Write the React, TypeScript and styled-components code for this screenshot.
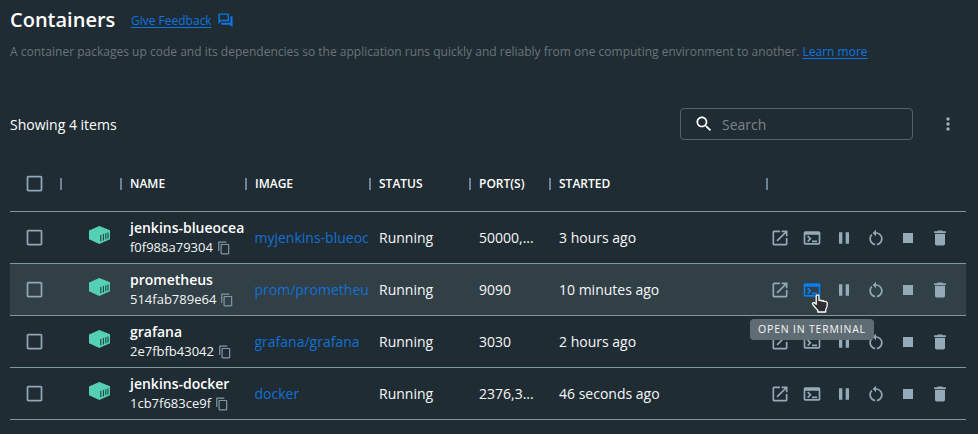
import React from "react";
import styled, { createGlobalStyle } from "styled-components";

const GlobalStyle = createGlobalStyle`
  * { box-sizing: border-box; }
  body {
    margin: 0;
    background: #202c33;
    color: #fff;
    font-family: "Open Sans", "Noto Sans", sans-serif;
    font-size: 14px;
    overflow: hidden;
  }
`;

const paths = {
  forum:
    "M15 4v7H5.17L4 12.17V4h11m1-2H3c-.55 0-1 .45-1 1v14l4-4h10c.55 0 1-.45 1-1V3c0-.55-.45-1-1-1zm5 4h-2v9H6v2c0 .55.45 1 1 1h11l4 4V7c0-.55-.45-1-1-1z",
  search:
    "M15.5 14h-.79l-.28-.27C15.41 12.59 16 11.11 16 9.5 16 5.91 13.09 3 9.5 3S3 5.91 3 9.5 5.91 16 9.5 16c1.61 0 3.09-.59 4.23-1.57l.27.28v.79l5 4.99L20.49 19l-4.99-5zm-6 0C7.01 14 5 11.99 5 9.5S7.01 5 9.5 5 14 7.01 14 9.5 11.99 14 9.5 14z",
  more:
    "M12 8c1.1 0 2-.9 2-2s-.9-2-2-2-2 .9-2 2 .9 2 2 2zm0 2c-1.1 0-2 .9-2 2s.9 2 2 2 2-.9 2-2-.9-2-2-2zm0 6c-1.1 0-2 .9-2 2s.9 2 2 2 2-.9 2-2-.9-2-2-2z",
  checkbox:
    "M19 5v14H5V5h14m0-2H5c-1.1 0-2 .9-2 2v14c0 1.1.9 2 2 2h14c1.1 0 2-.9 2-2V5c0-1.1-.9-2-2-2z",
  copy:
    "M16 1H4c-1.1 0-2 .9-2 2v14h2V3h12V1zm3 4H8c-1.1 0-2 .9-2 2v14c0 1.1.9 2 2 2h11c1.1 0 2-.9 2-2V7c0-1.1-.9-2-2-2zm0 16H8V7h11v14z",
  open:
    "M19 19H5V5h7V3H5c-1.11 0-2 .9-2 2v14c0 1.1.89 2 2 2h14c1.1 0 2-.9 2-2v-7h-2v7zM14 3v2h3.59l-9.83 9.83 1.41 1.41L19 6.41V10h2V3h-7z",
  terminal:
    "M20 4H4c-1.11 0-2 .9-2 2v12c0 1.1.89 2 2 2h16c1.1 0 2-.9 2-2V6c0-1.1-.89-2-2-2zm0 14H4V8h16v10zm-2-1h-6v-2h6v2zM7.5 17l-1.41-1.41L8.67 13l-2.59-2.59L7.5 9l4 4-4 4z",
  pause: "M6 19h4V5H6v14zm8-14v14h4V5h-4z",
  restart:
    "M12 5V2L8 6l4 4V7c3.31 0 6 2.69 6 6 0 2.97-2.17 5.43-5 5.91v2.02c3.95-.49 7-3.85 7-7.93 0-4.42-3.58-8-8-8zM6 13c0-1.65.67-3.15 1.76-4.24L6.34 7.34C4.9 8.79 4 10.79 4 13c0 4.08 3.05 7.44 7 7.93v-2.02c-2.83-.48-5-2.94-5-5.91z",
  stop: "M6 6h12v12H6z",
  trash:
    "M6 19c0 1.1.9 2 2 2h8c1.1 0 2-.9 2-2V7H6v12zM19 4h-3.5l-1-1h-5l-1 1H5v2h14V4z",
};
type IconName = keyof typeof paths;

const Svg = styled.svg<{ $size: number }>`
  display: block;
  flex: none;
  width: ${(p) => p.$size}px;
  height: ${(p) => p.$size}px;
  fill: currentColor;
`;
const Icon = ({ name, size = 20 }: { name: IconName; size?: number }) => (
  <Svg viewBox="0 0 24 24" $size={size}>
    <path d={paths[name]} />
  </Svg>
);

const Page = styled.main`
  width: 978px;
  height: 434px;
  padding: 0 9px 0 10px;
`;
const TitleRow = styled.header`
  display: flex;
  align-items: center;
  height: 40px;
`;
const Title = styled.h1`
  margin: 0;
  width: 121px;
  font-size: 20px;
  font-weight: 600;
  line-height: 40px;
`;
const Link = styled.a`
  color: #0d74e2;
  font-size: 12px;
  text-decoration: underline;
  text-underline-offset: 2px;
`;
const FeedbackIcon = styled.span`
  margin-left: 5px;
  color: #0a78ec;
`;
const Description = styled.p`
  margin: 0;
  height: 24px;
  line-height: 24px;
  font-size: 12px;
  letter-spacing: 0.007px;
  color: #69747a;
  white-space: nowrap;
`;
const Toolbar = styled.div`
  display: flex;
  align-items: center;
  height: 32px;
  margin-top: 44px;
`;
const Count = styled.div`
  flex: 1;
  padding-top: 2px;
  line-height: 20px;
`;
const SearchBox = styled.div`
  display: flex;
  align-items: center;
  gap: 8px;
  width: 233px;
  height: 32px;
  padding-left: 13px;
  border: 1px solid #566269;
  border-radius: 4px;
`;
const Placeholder = styled.span`
  color: #7b858a;
`;
const MenuButton = styled.div`
  margin-left: 24.5px;
  margin-right: 11.5px;
  color: #9ab0bd;
`;
const Table = styled.section`
  margin-top: 16px;
`;
const Row = styled.div<{ $header?: boolean; $hover?: boolean }>`
  display: grid;
  grid-template-columns: 50px 60px 125px 124px 100px 80px 217px 1fr;
  align-items: center;
  width: 956px;
  height: ${(p) => (p.$header ? 56 : 52)}px;
  border-bottom: 1px solid #8197a3;
  background: ${(p) => (p.$hover ? "#313f46" : "transparent")};
`;
const HeadCell = styled.div`
  display: flex;
  align-items: center;
  height: 12px;
  padding-left: 8px;
  border-left: 2px solid #6b8394;
  font-size: 12px;
  font-weight: 600;
`;
const CheckCell = styled.div`
  padding-left: 14px;
  color: #91a7b5;
`;
const LogoCell = styled.div`
  padding-left: 28px;
  padding-bottom: 5px;
`;
const NameCell = styled.div`
  padding-left: 10px;
  overflow: hidden;
  white-space: nowrap;
`;
const Name = styled.div`
  font-weight: 600;
  line-height: 20px;
`;
const IdLine = styled.div`
  display: flex;
  align-items: center;
  gap: 4px;
  height: 19px;
  padding-bottom: 2px;
  font-size: 13px;
  color: #f2f5f6;
  svg { color: #849aa7; margin-top: 3px; }
`;
const Cell = styled.div<{ $link?: boolean }>`
  padding-left: ${(p) => (p.$link ? 9.5 : 10)}px;
  overflow: hidden;
  white-space: nowrap;
  color: ${(p) => (p.$link ? "#1370d4" : "#f6f8f9")};
`;
const Clip = styled.div`
  width: 114px;
  overflow: hidden;
`;
const Actions = styled.div`
  display: flex;
  gap: 12px;
  padding-left: 4px;
`;
const Action = styled.div<{ $active?: boolean }>`
  position: relative;
  width: 20px;
  height: 20px;
  color: ${(p) => (p.$active ? "#087ef5" : "#94aab8")};
`;
const Tooltip = styled.div`
  position: absolute;
  z-index: 1;
  top: 39px;
  left: 50%;
  transform: translateX(-50%);
  width: 124px;
  height: 21px;
  border-radius: 4px;
  background: #606c74;
  color: #f4f6f7;
  font-size: 10.5px;
  font-weight: 500;
  line-height: 20px;
  letter-spacing: 0.8px;
  text-align: center;
  white-space: nowrap;
`;
const Cursor = styled.svg`
  position: absolute;
  z-index: 2;
  left: 9px;
  top: 14px;
  width: 18px;
  height: 19px;
`;

const ContainerLogo = () => (
  <svg width="22" height="20" viewBox="0 0 22 20" display="block">
    <path d="M11.3 1 22 5.3v9L11.3 19 1 14.3V5.6z" fill="#55d0b4" />
    <path
      d="M12.8 9.9v6.4M15.4 9.1v6.3M17.8 8.3v6M20 7.6v5.8"
      stroke="#20433f"
      strokeWidth="1.1"
      fill="none"
    />
  </svg>
);

const Hand = () => (
  <Cursor viewBox="0 0 18 19">
    <path
      d="M5.2 2.2c0-1.8 2.8-1.8 2.8 0v4.3c1.2-.6 2.2-.2 2.7.5 1-.5 2-.2 2.5.6 1.6-.5 3.1.2 3.1 1.9 0 3-.3 4.7-1.6 6.1V18H6.8v-1.8c-1.7-1.5-3.1-3.6-4.9-5.4-1.2-1.3.3-2.8 1.7-1.9l1.6 1.4z"
      fill="#302d30"
      stroke="#fff"
      strokeWidth="1.3"
      strokeLinejoin="round"
    />
  </Cursor>
);

const containers = [
  { name: "jenkins-blueocea", id: "f0f988a79304", image: "myjenkins-blueoc", ports: "50000,...", started: "3 hours ago" },
  { name: "prometheus", id: "514fab789e64", image: "prom/prometheu", ports: "9090", started: "10 minutes ago", hover: true },
  { name: "grafana", id: "2e7fbfb43042", image: "grafana/grafana", ports: "3030", started: "2 hours ago" },
  { name: "jenkins-docker", id: "1cb7f683ce9f", image: "docker", ports: "2376,3...", started: "46 seconds ago" },
];
const actions: IconName[] = ["open", "terminal", "pause", "restart", "stop", "trash"];

export default function App() {
  return (
    <Page>
      <GlobalStyle />
      <TitleRow>
        <Title>Containers</Title>
        <Link>Give Feedback</Link>
        <FeedbackIcon>
          <Icon name="forum" size={17} />
        </FeedbackIcon>
      </TitleRow>
      <Description>
        A container packages up code and its dependencies so the application runs quickly and
        reliably from one computing environment to another. <Link>Learn more</Link>
      </Description>
      <Toolbar>
        <Count>Showing 4 items</Count>
        <SearchBox>
          <Icon name="search" />
          <Placeholder>Search</Placeholder>
        </SearchBox>
        <MenuButton>
          <Icon name="more" />
        </MenuButton>
      </Toolbar>
      <Table>
        <Row $header>
          <CheckCell>
            <Icon name="checkbox" size={21} />
          </CheckCell>
          <HeadCell />
          <HeadCell>NAME</HeadCell>
          <HeadCell>IMAGE</HeadCell>
          <HeadCell>STATUS</HeadCell>
          <HeadCell>PORT(S)</HeadCell>
          <HeadCell>STARTED</HeadCell>
          <HeadCell />
        </Row>
        {containers.map((c) => (
          <Row key={c.name} $hover={c.hover}>
            <CheckCell>
              <Icon name="checkbox" size={21} />
            </CheckCell>
            <LogoCell>
              <ContainerLogo />
            </LogoCell>
            <NameCell>
              <Name>{c.name}</Name>
              <IdLine>
                {c.id}
                <Icon name="copy" size={14} />
              </IdLine>
            </NameCell>
            <Cell $link>
              <Clip>{c.image}</Clip>
            </Cell>
            <Cell>Running</Cell>
            <Cell>{c.ports}</Cell>
            <Cell>{c.started}</Cell>
            <Actions>
              {actions.map((a) => {
                const active = c.hover && a === "terminal";
                return (
                  <Action key={a} $active={active}>
                    <Icon name={a} />
                    {active && <Tooltip>OPEN IN TERMINAL</Tooltip>}
                    {active && <Hand />}
                  </Action>
                );
              })}
            </Actions>
          </Row>
        ))}
      </Table>
    </Page>
  );
}
